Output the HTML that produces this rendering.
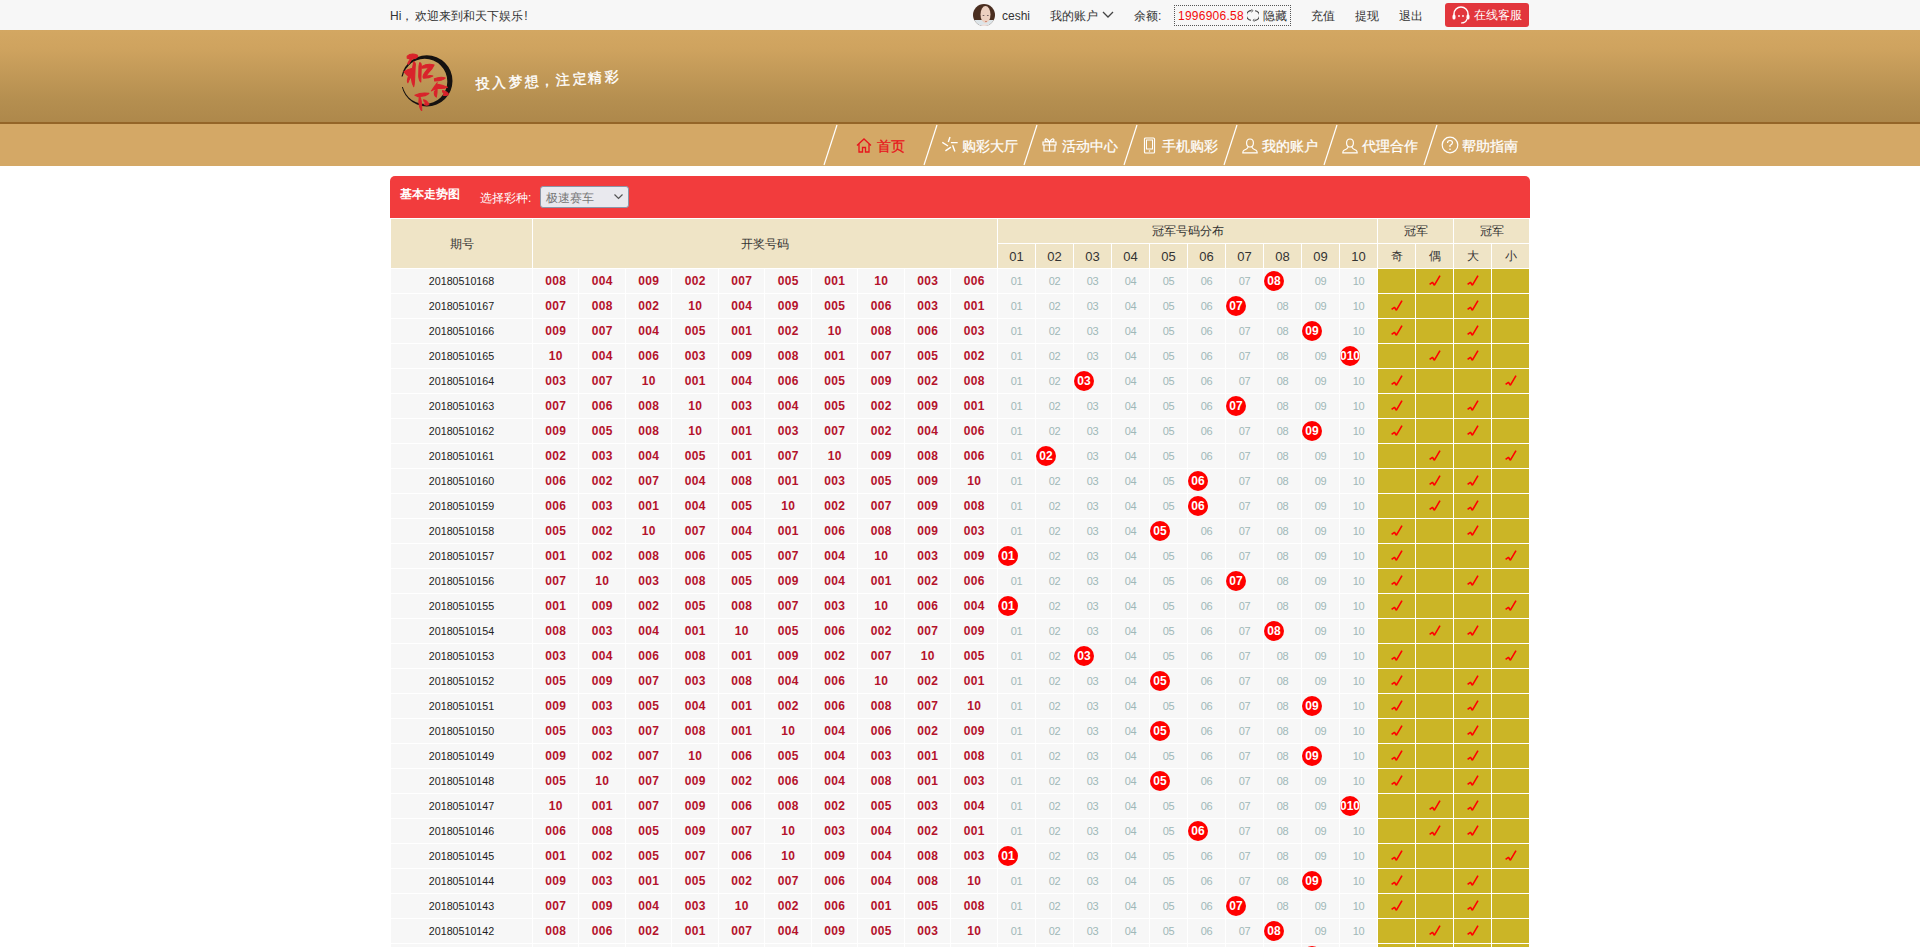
<!DOCTYPE html>
<html><head><meta charset="utf-8">
<style>
*{margin:0;padding:0;box-sizing:border-box}
html,body{width:1920px;height:947px;overflow:hidden;background:#fff;font-family:"Liberation Sans",sans-serif;color:#333}
.abs{position:absolute}
.slg{color:#fff;font-size:14px;line-height:16px;-webkit-text-stroke:0.35px #fff;transform:rotate(-4deg)}
#top{position:absolute;left:0;top:0;width:1920px;height:30px;background:#f7f7f7}
#hdr{position:absolute;left:0;top:30px;width:1920px;height:92px;background:linear-gradient(#d3a762 0%,#cfa35f 20%,#b58f50 75%,#ae884b 100%)}
#hdrline{position:absolute;left:0;top:122px;width:1920px;height:2px;background:#946528}
#nav{position:absolute;left:0;top:124px;width:1920px;height:42px;background:#d4a866}
.t12{font-size:12px;line-height:14px;position:absolute;white-space:nowrap;margin-top:1px}
.navi{position:absolute;top:138px;font-size:14px;line-height:16px;color:#fff;white-space:nowrap;-webkit-text-stroke:0.25px currentColor}
#redbar{position:absolute;left:390px;top:176px;width:1140px;height:42px;background:#f23c3d;border-radius:5px 5px 0 0}
#tbl{position:absolute;left:390px;top:218px;width:1140px;height:729px;background:#fff}
.hd,.dc,.gc{position:absolute;display:flex;align-items:center;justify-content:center;white-space:nowrap}
.hd{background:#efe4c6;font-size:12px;color:#333;padding-top:1px}
.hn{font-size:13px}
.dc{background:#f7f7f7}
.per{font-size:10.7px;color:#222}
.num{font-size:12px;font-weight:bold;color:#b4122b;letter-spacing:0.3px;padding-left:0.3px}
.dn{font-size:11px;color:#9fb8b8;letter-spacing:-0.3px}
.gc{background:#cbb526}
.ball{position:absolute;left:0;top:2px;width:20px;height:20px;border-radius:50%;background:#f00;color:#fff;font-weight:bold;font-size:12px;display:flex;align-items:center;justify-content:center;letter-spacing:0px}
</style></head><body>
<div id="top"></div>
<div class="t12" style="left:390px;top:8px;color:#333">Hi<span style="margin-right:1.5px">，</span>欢迎来到和天下娱乐<span style="margin-left:1.5px">!</span></div>
<svg class="abs" style="left:973px;top:4px" width="22" height="22" viewBox="0 0 22 22"><defs><clipPath id="av"><circle cx="11" cy="11" r="11"/></clipPath></defs><g clip-path="url(#av)"><rect width="22" height="22" fill="#4a2e20"/><rect x="0" y="16" width="22" height="6" fill="#dde4e8"/><ellipse cx="12.5" cy="10.5" rx="5" ry="8.5" fill="#ecd0c0"/><path d="M7 22 Q12 18 17 22 Z" fill="#f0e0dc"/><ellipse cx="10.5" cy="11.5" rx="1" ry="0.6" fill="#6a5a5a"/><ellipse cx="14.8" cy="11.5" rx="1" ry="0.6" fill="#6a5a5a"/><path d="M12 17.5 H14" stroke="#c87a6a" stroke-width="0.8"/></g></svg>
<div class="t12" style="left:1002px;top:8px">ceshi</div>
<div class="t12" style="left:1050px;top:8px">我的账户</div>
<svg class="abs" style="left:1102px;top:11px" width="12" height="8" viewBox="0 0 12 8"><path d="M1 1 L6 6 L11 1" fill="none" stroke="#444" stroke-width="1.3"/></svg>
<div class="t12" style="left:1134px;top:8px">余额:</div>
<div class="abs" style="left:1174px;top:5px;width:117px;height:21px;border:1px dotted #555"></div>
<div class="t12" style="left:1178px;top:8px;color:#f40a0a;font-size:12px;letter-spacing:0.25px">1996906.58</div>
<svg class="abs" style="left:1247px;top:9px" width="12" height="13" viewBox="0 0 12 13"><path d="M4.5 1.6 A4.8 4.8 0 0 0 4 11.2" fill="none" stroke="#444" stroke-width="1.1"/><path d="M7.5 11.4 A4.8 4.8 0 0 0 8 1.8" fill="none" stroke="#444" stroke-width="1.1"/><path d="M4.5 0.2 L6 1.7 L4.3 3.2" fill="none" stroke="#555" stroke-width="0.9"/><path d="M7.5 9.8 L6 11.3 L7.6 12.8" fill="none" stroke="#555" stroke-width="0.9"/></svg>
<div class="t12" style="left:1263px;top:8px">隐藏</div>
<div class="t12" style="left:1311px;top:8px">充值</div>
<div class="t12" style="left:1355px;top:8px">提现</div>
<div class="t12" style="left:1399px;top:8px">退出</div>
<div class="abs" style="left:1445px;top:3px;width:84px;height:24px;background:#e2363c;border-radius:3px"></div>
<svg class="abs" style="left:1451px;top:6px" width="20" height="18" viewBox="0 0 20 18"><path d="M3 11 V8 A7 7 0 0 1 17 8 V11" fill="none" stroke="#fff" stroke-width="1.5"/><rect x="1.5" y="8.5" width="3" height="5" rx="1.5" fill="#fff"/><rect x="15.5" y="8.5" width="3" height="5" rx="1.5" fill="#fff"/><path d="M16 13 Q15 17 10 17" fill="none" stroke="#fff" stroke-width="1.2"/><circle cx="8" cy="10" r="0.9" fill="#fff"/><circle cx="12" cy="10" r="0.9" fill="#fff"/></svg>
<div class="t12" style="left:1474px;top:7px;color:#fff">在线客服</div>

<div id="hdr"></div>
<div id="hdrline"></div>
<svg class="abs" style="left:398px;top:50px" width="60" height="62" viewBox="0 0 916 947">
<defs><mask id="lm"><rect width="916" height="947" fill="#fff"/><rect x="0" y="405" width="170" height="160" fill="#000"/></mask></defs>
<path mask="url(#lm)" fill-rule="evenodd" fill="#161210" d="M48 472 A392 392 0 1 0 832 472 A392 392 0 1 0 48 472 Z M63 480 A345 345 0 1 1 753 480 A345 345 0 1 1 63 480 Z"/>
<g fill="#d9232b" stroke="#d9232b" stroke-width="16" stroke-linejoin="round">
<path d="M140 95 Q200 40 290 75 Q320 100 270 125 Q200 140 140 125 Z"/>
<path d="M190 128 L212 133 L162 218 L148 208 Z"/>
<path d="M240 180 Q275 190 262 260 L255 420 Q252 520 240 560 Q212 520 205 440 L200 400 Q170 450 150 500 Q132 470 160 400 Q120 370 90 330 Q140 300 220 280 Z"/>
<path d="M330 195 Q360 190 355 260 L348 490 Q322 470 316 400 L320 250 Z"/>
<path d="M365 250 Q450 200 552 228 Q532 280 470 340 Q440 380 432 400 Q500 378 532 398 Q480 432 392 432 Q368 410 400 360 Q440 300 468 272 Q420 270 365 278 Z"/>
<path d="M555 440 Q650 400 722 428 Q690 472 560 475 Z"/>
<path d="M585 518 Q680 528 755 568 Q700 595 605 585 Q545 605 510 625 Q560 545 600 500 Z"/>
<path d="M598 575 Q600 650 585 720 Q548 700 555 640 Z"/>
<path d="M680 618 Q762 640 772 680 Q742 702 690 692 Q722 662 680 642 Z"/>
<path d="M258 692 Q360 640 472 662 Q440 705 300 712 Z"/>
<path d="M325 700 Q368 760 362 925 Q332 905 318 800 Z"/>
<path d="M390 760 Q445 770 472 832 Q440 852 400 832 Q432 810 395 782 Z"/>
</g></svg>
<div class="abs slg" style="left:476.2px;top:76.3px">投</div>
<div class="abs slg" style="left:492.0px;top:75.4px">入</div>
<div class="abs slg" style="left:508.5px;top:74.4px">梦</div>
<div class="abs slg" style="left:524.5px;top:73.5px">想</div>
<div class="abs slg" style="left:539.5px;top:72.6px">，</div>
<div class="abs slg" style="left:556.2px;top:71.6px">注</div>
<div class="abs slg" style="left:572.5px;top:70.7px">定</div>
<div class="abs slg" style="left:587.8px;top:69.8px">精</div>
<div class="abs slg" style="left:604.5px;top:68.8px">彩</div>

<div id="nav"></div>
<svg class="abs" style="left:800px;top:124px" width="740" height="42" viewBox="0 0 740 42">
<g stroke="#fff" stroke-width="1.2"><line x1="37" y1="1" x2="24" y2="41"/><line x1="137" y1="1" x2="124" y2="41"/><line x1="237" y1="1" x2="224" y2="41"/><line x1="337" y1="1" x2="324" y2="41"/><line x1="437" y1="1" x2="424" y2="41"/><line x1="537" y1="1" x2="524" y2="41"/><line x1="637" y1="1" x2="624" y2="41"/></g>
</svg>
<svg class="abs" style="left:856px;top:138px" width="16" height="15" viewBox="0 0 16 15"><path d="M1 7.5 L8 1 L15 7.5 M3 6 V14 H6.5 V9.5 H9.5 V14 H13 V6" fill="none" stroke="#e8141c" stroke-width="1.3"/></svg>
<div class="navi" style="left:877px;color:#e8141c">首页</div>
<svg class="abs" style="left:942px;top:136px" width="17" height="17" viewBox="0 0 17 17"><path d="M8 1 L6.3 6 M0.3 6.3 L6 10 M8.9 6.6 H15.7 M3.4 14.9 L8.9 11.2 M10.6 9.2 L12.9 15.5" fill="none" stroke="#fff" stroke-width="1.4"/></svg>
<div class="navi" style="left:962px">购彩大厅</div>
<svg class="abs" style="left:1042px;top:137px" width="15" height="15" viewBox="0 0 15 15"><path d="M1 5 H14 V8 H1 Z M2 8 V14 H13 V8 M7.5 5 V14 M7.5 5 Q4 0 3 3 Q3 5 7.5 5 Q11 0 12 3 Q12 5 7.5 5" fill="none" stroke="#fff" stroke-width="1.2"/></svg>
<div class="navi" style="left:1062px">活动中心</div>
<svg class="abs" style="left:1143px;top:137px" width="13" height="17" viewBox="0 0 13 17"><rect x="1.5" y="1" width="10" height="15" rx="1" fill="none" stroke="#fff" stroke-width="1.2"/><rect x="3.5" y="3" width="6" height="9" fill="none" stroke="#fff" stroke-width="1"/><circle cx="6.5" cy="14" r="0.8" fill="#fff"/></svg>
<div class="navi" style="left:1162px">手机购彩</div>
<svg class="abs" style="left:1242px;top:138px" width="16" height="16" viewBox="0 0 16 16"><path d="M8 1 C5.5 1 4.6 3 4.6 5 C4.6 7.2 5.8 9 8 9 C10.2 9 11.4 7.2 11.4 5 C11.4 3 10.5 1 8 1 Z M6 8.6 Q6.2 10.4 2 12.3 Q0.8 12.9 0.8 14.8 H15.2 Q15.2 12.9 14 12.3 Q9.8 10.4 10 8.6" fill="none" stroke="#fff" stroke-width="1.15"/></svg>
<div class="navi" style="left:1262px">我的账户</div>
<svg class="abs" style="left:1342px;top:138px" width="16" height="16" viewBox="0 0 16 16"><path d="M8 1 C5.5 1 4.6 3 4.6 5 C4.6 7.2 5.8 9 8 9 C10.2 9 11.4 7.2 11.4 5 C11.4 3 10.5 1 8 1 Z M6 8.6 Q6.2 10.4 2 12.3 Q0.8 12.9 0.8 14.8 H15.2 Q15.2 12.9 14 12.3 Q9.8 10.4 10 8.6" fill="none" stroke="#fff" stroke-width="1.15"/></svg>
<div class="navi" style="left:1362px">代理合作</div>
<svg class="abs" style="left:1441px;top:136px" width="18" height="18" viewBox="0 0 18 18"><circle cx="9" cy="9" r="7.8" fill="none" stroke="#fff" stroke-width="1.2"/><path d="M6.5 7 Q6.5 4.5 9 4.5 Q11.5 4.5 11.5 6.8 Q11.5 8.3 9 9.5 V11" fill="none" stroke="#fff" stroke-width="1.2"/><circle cx="9" cy="13.2" r="0.8" fill="#fff"/></svg>
<div class="navi" style="left:1462px">帮助指南</div>

<div id="redbar"></div>
<div class="abs" style="left:400px;top:187px;color:#fff;font-size:12px;font-weight:bold;line-height:14px">基本走势图</div>
<div class="abs" style="left:480px;top:191px;color:#fff;font-size:12px;line-height:14px">选择彩种:</div>
<div class="abs" style="left:540px;top:186px;width:89px;height:22px;background:#e9e9ee;border:1px solid #8a96a8;border-radius:3px"></div>
<div class="abs" style="left:546px;top:191px;color:#777;font-size:12px;line-height:14px">极速赛车</div>
<svg class="abs" style="left:614px;top:194px" width="9" height="6" viewBox="0 0 9 6"><path d="M0.5 0.5 L4.5 4.5 L8.5 0.5" fill="none" stroke="#555" stroke-width="1.2"/></svg>
<div id="tbl"></div>
<div class="hd" style="left:391px;top:219px;width:141px;height:49px">期号</div>
<div class="hd" style="left:533px;top:219px;width:464px;height:49px">开奖号码</div>
<div class="hd" style="left:998px;top:219px;width:379px;height:24px">冠军号码分布</div>
<div class="hd" style="left:1378px;top:219px;width:75px;height:24px">冠军</div>
<div class="hd" style="left:1454px;top:219px;width:75px;height:24px">冠军</div>
<div class="hd hn" style="left:998px;top:244px;width:37px;height:24px">01</div>
<div class="hd hn" style="left:1036px;top:244px;width:37px;height:24px">02</div>
<div class="hd hn" style="left:1074px;top:244px;width:37px;height:24px">03</div>
<div class="hd hn" style="left:1112px;top:244px;width:37px;height:24px">04</div>
<div class="hd hn" style="left:1150px;top:244px;width:37px;height:24px">05</div>
<div class="hd hn" style="left:1188px;top:244px;width:37px;height:24px">06</div>
<div class="hd hn" style="left:1226px;top:244px;width:37px;height:24px">07</div>
<div class="hd hn" style="left:1264px;top:244px;width:37px;height:24px">08</div>
<div class="hd hn" style="left:1302px;top:244px;width:37px;height:24px">09</div>
<div class="hd hn" style="left:1340px;top:244px;width:37px;height:24px">10</div>
<div class="hd" style="left:1378px;top:244px;width:37px;height:24px">奇</div>
<div class="hd" style="left:1416px;top:244px;width:37px;height:24px">偶</div>
<div class="hd" style="left:1454px;top:244px;width:37px;height:24px">大</div>
<div class="hd" style="left:1492px;top:244px;width:37px;height:24px">小</div>
<div class="dc per" style="left:391px;top:269px;width:141px;height:24px">20180510168</div>
<div class="dc num" style="left:533px;top:269px;width:45px;height:24px">008</div>
<div class="dc num" style="left:579px;top:269px;width:46px;height:24px">004</div>
<div class="dc num" style="left:626px;top:269px;width:45px;height:24px">009</div>
<div class="dc num" style="left:672px;top:269px;width:46px;height:24px">002</div>
<div class="dc num" style="left:719px;top:269px;width:45px;height:24px">007</div>
<div class="dc num" style="left:765px;top:269px;width:46px;height:24px">005</div>
<div class="dc num" style="left:812px;top:269px;width:45px;height:24px">001</div>
<div class="dc num" style="left:858px;top:269px;width:46px;height:24px">10</div>
<div class="dc num" style="left:905px;top:269px;width:45px;height:24px">003</div>
<div class="dc num" style="left:951px;top:269px;width:46px;height:24px">006</div>
<div class="dc dn" style="left:998px;top:269px;width:37px;height:24px">01</div>
<div class="dc dn" style="left:1036px;top:269px;width:37px;height:24px">02</div>
<div class="dc dn" style="left:1074px;top:269px;width:37px;height:24px">03</div>
<div class="dc dn" style="left:1112px;top:269px;width:37px;height:24px">04</div>
<div class="dc dn" style="left:1150px;top:269px;width:37px;height:24px">05</div>
<div class="dc dn" style="left:1188px;top:269px;width:37px;height:24px">06</div>
<div class="dc dn" style="left:1226px;top:269px;width:37px;height:24px">07</div>
<div class="dc" style="left:1264px;top:269px;width:37px;height:24px"><span class="ball">08</span></div>
<div class="dc dn" style="left:1302px;top:269px;width:37px;height:24px">09</div>
<div class="dc dn" style="left:1340px;top:269px;width:37px;height:24px">10</div>
<div class="gc" style="left:1378px;top:269px;width:37px;height:24px"></div>
<div class="gc" style="left:1416px;top:269px;width:37px;height:24px"><svg width="12" height="12" viewBox="0 0 12 12"><path d="M0.6 9.3 L3.4 7.3 L5.4 10.2 L11 0.6" fill="none" stroke="#f00" stroke-width="1.6" stroke-linejoin="bevel"/></svg></div>
<div class="gc" style="left:1454px;top:269px;width:37px;height:24px"><svg width="12" height="12" viewBox="0 0 12 12"><path d="M0.6 9.3 L3.4 7.3 L5.4 10.2 L11 0.6" fill="none" stroke="#f00" stroke-width="1.6" stroke-linejoin="bevel"/></svg></div>
<div class="gc" style="left:1492px;top:269px;width:37px;height:24px"></div>
<div class="dc per" style="left:391px;top:294px;width:141px;height:24px">20180510167</div>
<div class="dc num" style="left:533px;top:294px;width:45px;height:24px">007</div>
<div class="dc num" style="left:579px;top:294px;width:46px;height:24px">008</div>
<div class="dc num" style="left:626px;top:294px;width:45px;height:24px">002</div>
<div class="dc num" style="left:672px;top:294px;width:46px;height:24px">10</div>
<div class="dc num" style="left:719px;top:294px;width:45px;height:24px">004</div>
<div class="dc num" style="left:765px;top:294px;width:46px;height:24px">009</div>
<div class="dc num" style="left:812px;top:294px;width:45px;height:24px">005</div>
<div class="dc num" style="left:858px;top:294px;width:46px;height:24px">006</div>
<div class="dc num" style="left:905px;top:294px;width:45px;height:24px">003</div>
<div class="dc num" style="left:951px;top:294px;width:46px;height:24px">001</div>
<div class="dc dn" style="left:998px;top:294px;width:37px;height:24px">01</div>
<div class="dc dn" style="left:1036px;top:294px;width:37px;height:24px">02</div>
<div class="dc dn" style="left:1074px;top:294px;width:37px;height:24px">03</div>
<div class="dc dn" style="left:1112px;top:294px;width:37px;height:24px">04</div>
<div class="dc dn" style="left:1150px;top:294px;width:37px;height:24px">05</div>
<div class="dc dn" style="left:1188px;top:294px;width:37px;height:24px">06</div>
<div class="dc" style="left:1226px;top:294px;width:37px;height:24px"><span class="ball">07</span></div>
<div class="dc dn" style="left:1264px;top:294px;width:37px;height:24px">08</div>
<div class="dc dn" style="left:1302px;top:294px;width:37px;height:24px">09</div>
<div class="dc dn" style="left:1340px;top:294px;width:37px;height:24px">10</div>
<div class="gc" style="left:1378px;top:294px;width:37px;height:24px"><svg width="12" height="12" viewBox="0 0 12 12"><path d="M0.6 9.3 L3.4 7.3 L5.4 10.2 L11 0.6" fill="none" stroke="#f00" stroke-width="1.6" stroke-linejoin="bevel"/></svg></div>
<div class="gc" style="left:1416px;top:294px;width:37px;height:24px"></div>
<div class="gc" style="left:1454px;top:294px;width:37px;height:24px"><svg width="12" height="12" viewBox="0 0 12 12"><path d="M0.6 9.3 L3.4 7.3 L5.4 10.2 L11 0.6" fill="none" stroke="#f00" stroke-width="1.6" stroke-linejoin="bevel"/></svg></div>
<div class="gc" style="left:1492px;top:294px;width:37px;height:24px"></div>
<div class="dc per" style="left:391px;top:319px;width:141px;height:24px">20180510166</div>
<div class="dc num" style="left:533px;top:319px;width:45px;height:24px">009</div>
<div class="dc num" style="left:579px;top:319px;width:46px;height:24px">007</div>
<div class="dc num" style="left:626px;top:319px;width:45px;height:24px">004</div>
<div class="dc num" style="left:672px;top:319px;width:46px;height:24px">005</div>
<div class="dc num" style="left:719px;top:319px;width:45px;height:24px">001</div>
<div class="dc num" style="left:765px;top:319px;width:46px;height:24px">002</div>
<div class="dc num" style="left:812px;top:319px;width:45px;height:24px">10</div>
<div class="dc num" style="left:858px;top:319px;width:46px;height:24px">008</div>
<div class="dc num" style="left:905px;top:319px;width:45px;height:24px">006</div>
<div class="dc num" style="left:951px;top:319px;width:46px;height:24px">003</div>
<div class="dc dn" style="left:998px;top:319px;width:37px;height:24px">01</div>
<div class="dc dn" style="left:1036px;top:319px;width:37px;height:24px">02</div>
<div class="dc dn" style="left:1074px;top:319px;width:37px;height:24px">03</div>
<div class="dc dn" style="left:1112px;top:319px;width:37px;height:24px">04</div>
<div class="dc dn" style="left:1150px;top:319px;width:37px;height:24px">05</div>
<div class="dc dn" style="left:1188px;top:319px;width:37px;height:24px">06</div>
<div class="dc dn" style="left:1226px;top:319px;width:37px;height:24px">07</div>
<div class="dc dn" style="left:1264px;top:319px;width:37px;height:24px">08</div>
<div class="dc" style="left:1302px;top:319px;width:37px;height:24px"><span class="ball">09</span></div>
<div class="dc dn" style="left:1340px;top:319px;width:37px;height:24px">10</div>
<div class="gc" style="left:1378px;top:319px;width:37px;height:24px"><svg width="12" height="12" viewBox="0 0 12 12"><path d="M0.6 9.3 L3.4 7.3 L5.4 10.2 L11 0.6" fill="none" stroke="#f00" stroke-width="1.6" stroke-linejoin="bevel"/></svg></div>
<div class="gc" style="left:1416px;top:319px;width:37px;height:24px"></div>
<div class="gc" style="left:1454px;top:319px;width:37px;height:24px"><svg width="12" height="12" viewBox="0 0 12 12"><path d="M0.6 9.3 L3.4 7.3 L5.4 10.2 L11 0.6" fill="none" stroke="#f00" stroke-width="1.6" stroke-linejoin="bevel"/></svg></div>
<div class="gc" style="left:1492px;top:319px;width:37px;height:24px"></div>
<div class="dc per" style="left:391px;top:344px;width:141px;height:24px">20180510165</div>
<div class="dc num" style="left:533px;top:344px;width:45px;height:24px">10</div>
<div class="dc num" style="left:579px;top:344px;width:46px;height:24px">004</div>
<div class="dc num" style="left:626px;top:344px;width:45px;height:24px">006</div>
<div class="dc num" style="left:672px;top:344px;width:46px;height:24px">003</div>
<div class="dc num" style="left:719px;top:344px;width:45px;height:24px">009</div>
<div class="dc num" style="left:765px;top:344px;width:46px;height:24px">008</div>
<div class="dc num" style="left:812px;top:344px;width:45px;height:24px">001</div>
<div class="dc num" style="left:858px;top:344px;width:46px;height:24px">007</div>
<div class="dc num" style="left:905px;top:344px;width:45px;height:24px">005</div>
<div class="dc num" style="left:951px;top:344px;width:46px;height:24px">002</div>
<div class="dc dn" style="left:998px;top:344px;width:37px;height:24px">01</div>
<div class="dc dn" style="left:1036px;top:344px;width:37px;height:24px">02</div>
<div class="dc dn" style="left:1074px;top:344px;width:37px;height:24px">03</div>
<div class="dc dn" style="left:1112px;top:344px;width:37px;height:24px">04</div>
<div class="dc dn" style="left:1150px;top:344px;width:37px;height:24px">05</div>
<div class="dc dn" style="left:1188px;top:344px;width:37px;height:24px">06</div>
<div class="dc dn" style="left:1226px;top:344px;width:37px;height:24px">07</div>
<div class="dc dn" style="left:1264px;top:344px;width:37px;height:24px">08</div>
<div class="dc dn" style="left:1302px;top:344px;width:37px;height:24px">09</div>
<div class="dc" style="left:1340px;top:344px;width:37px;height:24px"><span class="ball">010</span></div>
<div class="gc" style="left:1378px;top:344px;width:37px;height:24px"></div>
<div class="gc" style="left:1416px;top:344px;width:37px;height:24px"><svg width="12" height="12" viewBox="0 0 12 12"><path d="M0.6 9.3 L3.4 7.3 L5.4 10.2 L11 0.6" fill="none" stroke="#f00" stroke-width="1.6" stroke-linejoin="bevel"/></svg></div>
<div class="gc" style="left:1454px;top:344px;width:37px;height:24px"><svg width="12" height="12" viewBox="0 0 12 12"><path d="M0.6 9.3 L3.4 7.3 L5.4 10.2 L11 0.6" fill="none" stroke="#f00" stroke-width="1.6" stroke-linejoin="bevel"/></svg></div>
<div class="gc" style="left:1492px;top:344px;width:37px;height:24px"></div>
<div class="dc per" style="left:391px;top:369px;width:141px;height:24px">20180510164</div>
<div class="dc num" style="left:533px;top:369px;width:45px;height:24px">003</div>
<div class="dc num" style="left:579px;top:369px;width:46px;height:24px">007</div>
<div class="dc num" style="left:626px;top:369px;width:45px;height:24px">10</div>
<div class="dc num" style="left:672px;top:369px;width:46px;height:24px">001</div>
<div class="dc num" style="left:719px;top:369px;width:45px;height:24px">004</div>
<div class="dc num" style="left:765px;top:369px;width:46px;height:24px">006</div>
<div class="dc num" style="left:812px;top:369px;width:45px;height:24px">005</div>
<div class="dc num" style="left:858px;top:369px;width:46px;height:24px">009</div>
<div class="dc num" style="left:905px;top:369px;width:45px;height:24px">002</div>
<div class="dc num" style="left:951px;top:369px;width:46px;height:24px">008</div>
<div class="dc dn" style="left:998px;top:369px;width:37px;height:24px">01</div>
<div class="dc dn" style="left:1036px;top:369px;width:37px;height:24px">02</div>
<div class="dc" style="left:1074px;top:369px;width:37px;height:24px"><span class="ball">03</span></div>
<div class="dc dn" style="left:1112px;top:369px;width:37px;height:24px">04</div>
<div class="dc dn" style="left:1150px;top:369px;width:37px;height:24px">05</div>
<div class="dc dn" style="left:1188px;top:369px;width:37px;height:24px">06</div>
<div class="dc dn" style="left:1226px;top:369px;width:37px;height:24px">07</div>
<div class="dc dn" style="left:1264px;top:369px;width:37px;height:24px">08</div>
<div class="dc dn" style="left:1302px;top:369px;width:37px;height:24px">09</div>
<div class="dc dn" style="left:1340px;top:369px;width:37px;height:24px">10</div>
<div class="gc" style="left:1378px;top:369px;width:37px;height:24px"><svg width="12" height="12" viewBox="0 0 12 12"><path d="M0.6 9.3 L3.4 7.3 L5.4 10.2 L11 0.6" fill="none" stroke="#f00" stroke-width="1.6" stroke-linejoin="bevel"/></svg></div>
<div class="gc" style="left:1416px;top:369px;width:37px;height:24px"></div>
<div class="gc" style="left:1454px;top:369px;width:37px;height:24px"></div>
<div class="gc" style="left:1492px;top:369px;width:37px;height:24px"><svg width="12" height="12" viewBox="0 0 12 12"><path d="M0.6 9.3 L3.4 7.3 L5.4 10.2 L11 0.6" fill="none" stroke="#f00" stroke-width="1.6" stroke-linejoin="bevel"/></svg></div>
<div class="dc per" style="left:391px;top:394px;width:141px;height:24px">20180510163</div>
<div class="dc num" style="left:533px;top:394px;width:45px;height:24px">007</div>
<div class="dc num" style="left:579px;top:394px;width:46px;height:24px">006</div>
<div class="dc num" style="left:626px;top:394px;width:45px;height:24px">008</div>
<div class="dc num" style="left:672px;top:394px;width:46px;height:24px">10</div>
<div class="dc num" style="left:719px;top:394px;width:45px;height:24px">003</div>
<div class="dc num" style="left:765px;top:394px;width:46px;height:24px">004</div>
<div class="dc num" style="left:812px;top:394px;width:45px;height:24px">005</div>
<div class="dc num" style="left:858px;top:394px;width:46px;height:24px">002</div>
<div class="dc num" style="left:905px;top:394px;width:45px;height:24px">009</div>
<div class="dc num" style="left:951px;top:394px;width:46px;height:24px">001</div>
<div class="dc dn" style="left:998px;top:394px;width:37px;height:24px">01</div>
<div class="dc dn" style="left:1036px;top:394px;width:37px;height:24px">02</div>
<div class="dc dn" style="left:1074px;top:394px;width:37px;height:24px">03</div>
<div class="dc dn" style="left:1112px;top:394px;width:37px;height:24px">04</div>
<div class="dc dn" style="left:1150px;top:394px;width:37px;height:24px">05</div>
<div class="dc dn" style="left:1188px;top:394px;width:37px;height:24px">06</div>
<div class="dc" style="left:1226px;top:394px;width:37px;height:24px"><span class="ball">07</span></div>
<div class="dc dn" style="left:1264px;top:394px;width:37px;height:24px">08</div>
<div class="dc dn" style="left:1302px;top:394px;width:37px;height:24px">09</div>
<div class="dc dn" style="left:1340px;top:394px;width:37px;height:24px">10</div>
<div class="gc" style="left:1378px;top:394px;width:37px;height:24px"><svg width="12" height="12" viewBox="0 0 12 12"><path d="M0.6 9.3 L3.4 7.3 L5.4 10.2 L11 0.6" fill="none" stroke="#f00" stroke-width="1.6" stroke-linejoin="bevel"/></svg></div>
<div class="gc" style="left:1416px;top:394px;width:37px;height:24px"></div>
<div class="gc" style="left:1454px;top:394px;width:37px;height:24px"><svg width="12" height="12" viewBox="0 0 12 12"><path d="M0.6 9.3 L3.4 7.3 L5.4 10.2 L11 0.6" fill="none" stroke="#f00" stroke-width="1.6" stroke-linejoin="bevel"/></svg></div>
<div class="gc" style="left:1492px;top:394px;width:37px;height:24px"></div>
<div class="dc per" style="left:391px;top:419px;width:141px;height:24px">20180510162</div>
<div class="dc num" style="left:533px;top:419px;width:45px;height:24px">009</div>
<div class="dc num" style="left:579px;top:419px;width:46px;height:24px">005</div>
<div class="dc num" style="left:626px;top:419px;width:45px;height:24px">008</div>
<div class="dc num" style="left:672px;top:419px;width:46px;height:24px">10</div>
<div class="dc num" style="left:719px;top:419px;width:45px;height:24px">001</div>
<div class="dc num" style="left:765px;top:419px;width:46px;height:24px">003</div>
<div class="dc num" style="left:812px;top:419px;width:45px;height:24px">007</div>
<div class="dc num" style="left:858px;top:419px;width:46px;height:24px">002</div>
<div class="dc num" style="left:905px;top:419px;width:45px;height:24px">004</div>
<div class="dc num" style="left:951px;top:419px;width:46px;height:24px">006</div>
<div class="dc dn" style="left:998px;top:419px;width:37px;height:24px">01</div>
<div class="dc dn" style="left:1036px;top:419px;width:37px;height:24px">02</div>
<div class="dc dn" style="left:1074px;top:419px;width:37px;height:24px">03</div>
<div class="dc dn" style="left:1112px;top:419px;width:37px;height:24px">04</div>
<div class="dc dn" style="left:1150px;top:419px;width:37px;height:24px">05</div>
<div class="dc dn" style="left:1188px;top:419px;width:37px;height:24px">06</div>
<div class="dc dn" style="left:1226px;top:419px;width:37px;height:24px">07</div>
<div class="dc dn" style="left:1264px;top:419px;width:37px;height:24px">08</div>
<div class="dc" style="left:1302px;top:419px;width:37px;height:24px"><span class="ball">09</span></div>
<div class="dc dn" style="left:1340px;top:419px;width:37px;height:24px">10</div>
<div class="gc" style="left:1378px;top:419px;width:37px;height:24px"><svg width="12" height="12" viewBox="0 0 12 12"><path d="M0.6 9.3 L3.4 7.3 L5.4 10.2 L11 0.6" fill="none" stroke="#f00" stroke-width="1.6" stroke-linejoin="bevel"/></svg></div>
<div class="gc" style="left:1416px;top:419px;width:37px;height:24px"></div>
<div class="gc" style="left:1454px;top:419px;width:37px;height:24px"><svg width="12" height="12" viewBox="0 0 12 12"><path d="M0.6 9.3 L3.4 7.3 L5.4 10.2 L11 0.6" fill="none" stroke="#f00" stroke-width="1.6" stroke-linejoin="bevel"/></svg></div>
<div class="gc" style="left:1492px;top:419px;width:37px;height:24px"></div>
<div class="dc per" style="left:391px;top:444px;width:141px;height:24px">20180510161</div>
<div class="dc num" style="left:533px;top:444px;width:45px;height:24px">002</div>
<div class="dc num" style="left:579px;top:444px;width:46px;height:24px">003</div>
<div class="dc num" style="left:626px;top:444px;width:45px;height:24px">004</div>
<div class="dc num" style="left:672px;top:444px;width:46px;height:24px">005</div>
<div class="dc num" style="left:719px;top:444px;width:45px;height:24px">001</div>
<div class="dc num" style="left:765px;top:444px;width:46px;height:24px">007</div>
<div class="dc num" style="left:812px;top:444px;width:45px;height:24px">10</div>
<div class="dc num" style="left:858px;top:444px;width:46px;height:24px">009</div>
<div class="dc num" style="left:905px;top:444px;width:45px;height:24px">008</div>
<div class="dc num" style="left:951px;top:444px;width:46px;height:24px">006</div>
<div class="dc dn" style="left:998px;top:444px;width:37px;height:24px">01</div>
<div class="dc" style="left:1036px;top:444px;width:37px;height:24px"><span class="ball">02</span></div>
<div class="dc dn" style="left:1074px;top:444px;width:37px;height:24px">03</div>
<div class="dc dn" style="left:1112px;top:444px;width:37px;height:24px">04</div>
<div class="dc dn" style="left:1150px;top:444px;width:37px;height:24px">05</div>
<div class="dc dn" style="left:1188px;top:444px;width:37px;height:24px">06</div>
<div class="dc dn" style="left:1226px;top:444px;width:37px;height:24px">07</div>
<div class="dc dn" style="left:1264px;top:444px;width:37px;height:24px">08</div>
<div class="dc dn" style="left:1302px;top:444px;width:37px;height:24px">09</div>
<div class="dc dn" style="left:1340px;top:444px;width:37px;height:24px">10</div>
<div class="gc" style="left:1378px;top:444px;width:37px;height:24px"></div>
<div class="gc" style="left:1416px;top:444px;width:37px;height:24px"><svg width="12" height="12" viewBox="0 0 12 12"><path d="M0.6 9.3 L3.4 7.3 L5.4 10.2 L11 0.6" fill="none" stroke="#f00" stroke-width="1.6" stroke-linejoin="bevel"/></svg></div>
<div class="gc" style="left:1454px;top:444px;width:37px;height:24px"></div>
<div class="gc" style="left:1492px;top:444px;width:37px;height:24px"><svg width="12" height="12" viewBox="0 0 12 12"><path d="M0.6 9.3 L3.4 7.3 L5.4 10.2 L11 0.6" fill="none" stroke="#f00" stroke-width="1.6" stroke-linejoin="bevel"/></svg></div>
<div class="dc per" style="left:391px;top:469px;width:141px;height:24px">20180510160</div>
<div class="dc num" style="left:533px;top:469px;width:45px;height:24px">006</div>
<div class="dc num" style="left:579px;top:469px;width:46px;height:24px">002</div>
<div class="dc num" style="left:626px;top:469px;width:45px;height:24px">007</div>
<div class="dc num" style="left:672px;top:469px;width:46px;height:24px">004</div>
<div class="dc num" style="left:719px;top:469px;width:45px;height:24px">008</div>
<div class="dc num" style="left:765px;top:469px;width:46px;height:24px">001</div>
<div class="dc num" style="left:812px;top:469px;width:45px;height:24px">003</div>
<div class="dc num" style="left:858px;top:469px;width:46px;height:24px">005</div>
<div class="dc num" style="left:905px;top:469px;width:45px;height:24px">009</div>
<div class="dc num" style="left:951px;top:469px;width:46px;height:24px">10</div>
<div class="dc dn" style="left:998px;top:469px;width:37px;height:24px">01</div>
<div class="dc dn" style="left:1036px;top:469px;width:37px;height:24px">02</div>
<div class="dc dn" style="left:1074px;top:469px;width:37px;height:24px">03</div>
<div class="dc dn" style="left:1112px;top:469px;width:37px;height:24px">04</div>
<div class="dc dn" style="left:1150px;top:469px;width:37px;height:24px">05</div>
<div class="dc" style="left:1188px;top:469px;width:37px;height:24px"><span class="ball">06</span></div>
<div class="dc dn" style="left:1226px;top:469px;width:37px;height:24px">07</div>
<div class="dc dn" style="left:1264px;top:469px;width:37px;height:24px">08</div>
<div class="dc dn" style="left:1302px;top:469px;width:37px;height:24px">09</div>
<div class="dc dn" style="left:1340px;top:469px;width:37px;height:24px">10</div>
<div class="gc" style="left:1378px;top:469px;width:37px;height:24px"></div>
<div class="gc" style="left:1416px;top:469px;width:37px;height:24px"><svg width="12" height="12" viewBox="0 0 12 12"><path d="M0.6 9.3 L3.4 7.3 L5.4 10.2 L11 0.6" fill="none" stroke="#f00" stroke-width="1.6" stroke-linejoin="bevel"/></svg></div>
<div class="gc" style="left:1454px;top:469px;width:37px;height:24px"><svg width="12" height="12" viewBox="0 0 12 12"><path d="M0.6 9.3 L3.4 7.3 L5.4 10.2 L11 0.6" fill="none" stroke="#f00" stroke-width="1.6" stroke-linejoin="bevel"/></svg></div>
<div class="gc" style="left:1492px;top:469px;width:37px;height:24px"></div>
<div class="dc per" style="left:391px;top:494px;width:141px;height:24px">20180510159</div>
<div class="dc num" style="left:533px;top:494px;width:45px;height:24px">006</div>
<div class="dc num" style="left:579px;top:494px;width:46px;height:24px">003</div>
<div class="dc num" style="left:626px;top:494px;width:45px;height:24px">001</div>
<div class="dc num" style="left:672px;top:494px;width:46px;height:24px">004</div>
<div class="dc num" style="left:719px;top:494px;width:45px;height:24px">005</div>
<div class="dc num" style="left:765px;top:494px;width:46px;height:24px">10</div>
<div class="dc num" style="left:812px;top:494px;width:45px;height:24px">002</div>
<div class="dc num" style="left:858px;top:494px;width:46px;height:24px">007</div>
<div class="dc num" style="left:905px;top:494px;width:45px;height:24px">009</div>
<div class="dc num" style="left:951px;top:494px;width:46px;height:24px">008</div>
<div class="dc dn" style="left:998px;top:494px;width:37px;height:24px">01</div>
<div class="dc dn" style="left:1036px;top:494px;width:37px;height:24px">02</div>
<div class="dc dn" style="left:1074px;top:494px;width:37px;height:24px">03</div>
<div class="dc dn" style="left:1112px;top:494px;width:37px;height:24px">04</div>
<div class="dc dn" style="left:1150px;top:494px;width:37px;height:24px">05</div>
<div class="dc" style="left:1188px;top:494px;width:37px;height:24px"><span class="ball">06</span></div>
<div class="dc dn" style="left:1226px;top:494px;width:37px;height:24px">07</div>
<div class="dc dn" style="left:1264px;top:494px;width:37px;height:24px">08</div>
<div class="dc dn" style="left:1302px;top:494px;width:37px;height:24px">09</div>
<div class="dc dn" style="left:1340px;top:494px;width:37px;height:24px">10</div>
<div class="gc" style="left:1378px;top:494px;width:37px;height:24px"></div>
<div class="gc" style="left:1416px;top:494px;width:37px;height:24px"><svg width="12" height="12" viewBox="0 0 12 12"><path d="M0.6 9.3 L3.4 7.3 L5.4 10.2 L11 0.6" fill="none" stroke="#f00" stroke-width="1.6" stroke-linejoin="bevel"/></svg></div>
<div class="gc" style="left:1454px;top:494px;width:37px;height:24px"><svg width="12" height="12" viewBox="0 0 12 12"><path d="M0.6 9.3 L3.4 7.3 L5.4 10.2 L11 0.6" fill="none" stroke="#f00" stroke-width="1.6" stroke-linejoin="bevel"/></svg></div>
<div class="gc" style="left:1492px;top:494px;width:37px;height:24px"></div>
<div class="dc per" style="left:391px;top:519px;width:141px;height:24px">20180510158</div>
<div class="dc num" style="left:533px;top:519px;width:45px;height:24px">005</div>
<div class="dc num" style="left:579px;top:519px;width:46px;height:24px">002</div>
<div class="dc num" style="left:626px;top:519px;width:45px;height:24px">10</div>
<div class="dc num" style="left:672px;top:519px;width:46px;height:24px">007</div>
<div class="dc num" style="left:719px;top:519px;width:45px;height:24px">004</div>
<div class="dc num" style="left:765px;top:519px;width:46px;height:24px">001</div>
<div class="dc num" style="left:812px;top:519px;width:45px;height:24px">006</div>
<div class="dc num" style="left:858px;top:519px;width:46px;height:24px">008</div>
<div class="dc num" style="left:905px;top:519px;width:45px;height:24px">009</div>
<div class="dc num" style="left:951px;top:519px;width:46px;height:24px">003</div>
<div class="dc dn" style="left:998px;top:519px;width:37px;height:24px">01</div>
<div class="dc dn" style="left:1036px;top:519px;width:37px;height:24px">02</div>
<div class="dc dn" style="left:1074px;top:519px;width:37px;height:24px">03</div>
<div class="dc dn" style="left:1112px;top:519px;width:37px;height:24px">04</div>
<div class="dc" style="left:1150px;top:519px;width:37px;height:24px"><span class="ball">05</span></div>
<div class="dc dn" style="left:1188px;top:519px;width:37px;height:24px">06</div>
<div class="dc dn" style="left:1226px;top:519px;width:37px;height:24px">07</div>
<div class="dc dn" style="left:1264px;top:519px;width:37px;height:24px">08</div>
<div class="dc dn" style="left:1302px;top:519px;width:37px;height:24px">09</div>
<div class="dc dn" style="left:1340px;top:519px;width:37px;height:24px">10</div>
<div class="gc" style="left:1378px;top:519px;width:37px;height:24px"><svg width="12" height="12" viewBox="0 0 12 12"><path d="M0.6 9.3 L3.4 7.3 L5.4 10.2 L11 0.6" fill="none" stroke="#f00" stroke-width="1.6" stroke-linejoin="bevel"/></svg></div>
<div class="gc" style="left:1416px;top:519px;width:37px;height:24px"></div>
<div class="gc" style="left:1454px;top:519px;width:37px;height:24px"><svg width="12" height="12" viewBox="0 0 12 12"><path d="M0.6 9.3 L3.4 7.3 L5.4 10.2 L11 0.6" fill="none" stroke="#f00" stroke-width="1.6" stroke-linejoin="bevel"/></svg></div>
<div class="gc" style="left:1492px;top:519px;width:37px;height:24px"></div>
<div class="dc per" style="left:391px;top:544px;width:141px;height:24px">20180510157</div>
<div class="dc num" style="left:533px;top:544px;width:45px;height:24px">001</div>
<div class="dc num" style="left:579px;top:544px;width:46px;height:24px">002</div>
<div class="dc num" style="left:626px;top:544px;width:45px;height:24px">008</div>
<div class="dc num" style="left:672px;top:544px;width:46px;height:24px">006</div>
<div class="dc num" style="left:719px;top:544px;width:45px;height:24px">005</div>
<div class="dc num" style="left:765px;top:544px;width:46px;height:24px">007</div>
<div class="dc num" style="left:812px;top:544px;width:45px;height:24px">004</div>
<div class="dc num" style="left:858px;top:544px;width:46px;height:24px">10</div>
<div class="dc num" style="left:905px;top:544px;width:45px;height:24px">003</div>
<div class="dc num" style="left:951px;top:544px;width:46px;height:24px">009</div>
<div class="dc" style="left:998px;top:544px;width:37px;height:24px"><span class="ball">01</span></div>
<div class="dc dn" style="left:1036px;top:544px;width:37px;height:24px">02</div>
<div class="dc dn" style="left:1074px;top:544px;width:37px;height:24px">03</div>
<div class="dc dn" style="left:1112px;top:544px;width:37px;height:24px">04</div>
<div class="dc dn" style="left:1150px;top:544px;width:37px;height:24px">05</div>
<div class="dc dn" style="left:1188px;top:544px;width:37px;height:24px">06</div>
<div class="dc dn" style="left:1226px;top:544px;width:37px;height:24px">07</div>
<div class="dc dn" style="left:1264px;top:544px;width:37px;height:24px">08</div>
<div class="dc dn" style="left:1302px;top:544px;width:37px;height:24px">09</div>
<div class="dc dn" style="left:1340px;top:544px;width:37px;height:24px">10</div>
<div class="gc" style="left:1378px;top:544px;width:37px;height:24px"><svg width="12" height="12" viewBox="0 0 12 12"><path d="M0.6 9.3 L3.4 7.3 L5.4 10.2 L11 0.6" fill="none" stroke="#f00" stroke-width="1.6" stroke-linejoin="bevel"/></svg></div>
<div class="gc" style="left:1416px;top:544px;width:37px;height:24px"></div>
<div class="gc" style="left:1454px;top:544px;width:37px;height:24px"></div>
<div class="gc" style="left:1492px;top:544px;width:37px;height:24px"><svg width="12" height="12" viewBox="0 0 12 12"><path d="M0.6 9.3 L3.4 7.3 L5.4 10.2 L11 0.6" fill="none" stroke="#f00" stroke-width="1.6" stroke-linejoin="bevel"/></svg></div>
<div class="dc per" style="left:391px;top:569px;width:141px;height:24px">20180510156</div>
<div class="dc num" style="left:533px;top:569px;width:45px;height:24px">007</div>
<div class="dc num" style="left:579px;top:569px;width:46px;height:24px">10</div>
<div class="dc num" style="left:626px;top:569px;width:45px;height:24px">003</div>
<div class="dc num" style="left:672px;top:569px;width:46px;height:24px">008</div>
<div class="dc num" style="left:719px;top:569px;width:45px;height:24px">005</div>
<div class="dc num" style="left:765px;top:569px;width:46px;height:24px">009</div>
<div class="dc num" style="left:812px;top:569px;width:45px;height:24px">004</div>
<div class="dc num" style="left:858px;top:569px;width:46px;height:24px">001</div>
<div class="dc num" style="left:905px;top:569px;width:45px;height:24px">002</div>
<div class="dc num" style="left:951px;top:569px;width:46px;height:24px">006</div>
<div class="dc dn" style="left:998px;top:569px;width:37px;height:24px">01</div>
<div class="dc dn" style="left:1036px;top:569px;width:37px;height:24px">02</div>
<div class="dc dn" style="left:1074px;top:569px;width:37px;height:24px">03</div>
<div class="dc dn" style="left:1112px;top:569px;width:37px;height:24px">04</div>
<div class="dc dn" style="left:1150px;top:569px;width:37px;height:24px">05</div>
<div class="dc dn" style="left:1188px;top:569px;width:37px;height:24px">06</div>
<div class="dc" style="left:1226px;top:569px;width:37px;height:24px"><span class="ball">07</span></div>
<div class="dc dn" style="left:1264px;top:569px;width:37px;height:24px">08</div>
<div class="dc dn" style="left:1302px;top:569px;width:37px;height:24px">09</div>
<div class="dc dn" style="left:1340px;top:569px;width:37px;height:24px">10</div>
<div class="gc" style="left:1378px;top:569px;width:37px;height:24px"><svg width="12" height="12" viewBox="0 0 12 12"><path d="M0.6 9.3 L3.4 7.3 L5.4 10.2 L11 0.6" fill="none" stroke="#f00" stroke-width="1.6" stroke-linejoin="bevel"/></svg></div>
<div class="gc" style="left:1416px;top:569px;width:37px;height:24px"></div>
<div class="gc" style="left:1454px;top:569px;width:37px;height:24px"><svg width="12" height="12" viewBox="0 0 12 12"><path d="M0.6 9.3 L3.4 7.3 L5.4 10.2 L11 0.6" fill="none" stroke="#f00" stroke-width="1.6" stroke-linejoin="bevel"/></svg></div>
<div class="gc" style="left:1492px;top:569px;width:37px;height:24px"></div>
<div class="dc per" style="left:391px;top:594px;width:141px;height:24px">20180510155</div>
<div class="dc num" style="left:533px;top:594px;width:45px;height:24px">001</div>
<div class="dc num" style="left:579px;top:594px;width:46px;height:24px">009</div>
<div class="dc num" style="left:626px;top:594px;width:45px;height:24px">002</div>
<div class="dc num" style="left:672px;top:594px;width:46px;height:24px">005</div>
<div class="dc num" style="left:719px;top:594px;width:45px;height:24px">008</div>
<div class="dc num" style="left:765px;top:594px;width:46px;height:24px">007</div>
<div class="dc num" style="left:812px;top:594px;width:45px;height:24px">003</div>
<div class="dc num" style="left:858px;top:594px;width:46px;height:24px">10</div>
<div class="dc num" style="left:905px;top:594px;width:45px;height:24px">006</div>
<div class="dc num" style="left:951px;top:594px;width:46px;height:24px">004</div>
<div class="dc" style="left:998px;top:594px;width:37px;height:24px"><span class="ball">01</span></div>
<div class="dc dn" style="left:1036px;top:594px;width:37px;height:24px">02</div>
<div class="dc dn" style="left:1074px;top:594px;width:37px;height:24px">03</div>
<div class="dc dn" style="left:1112px;top:594px;width:37px;height:24px">04</div>
<div class="dc dn" style="left:1150px;top:594px;width:37px;height:24px">05</div>
<div class="dc dn" style="left:1188px;top:594px;width:37px;height:24px">06</div>
<div class="dc dn" style="left:1226px;top:594px;width:37px;height:24px">07</div>
<div class="dc dn" style="left:1264px;top:594px;width:37px;height:24px">08</div>
<div class="dc dn" style="left:1302px;top:594px;width:37px;height:24px">09</div>
<div class="dc dn" style="left:1340px;top:594px;width:37px;height:24px">10</div>
<div class="gc" style="left:1378px;top:594px;width:37px;height:24px"><svg width="12" height="12" viewBox="0 0 12 12"><path d="M0.6 9.3 L3.4 7.3 L5.4 10.2 L11 0.6" fill="none" stroke="#f00" stroke-width="1.6" stroke-linejoin="bevel"/></svg></div>
<div class="gc" style="left:1416px;top:594px;width:37px;height:24px"></div>
<div class="gc" style="left:1454px;top:594px;width:37px;height:24px"></div>
<div class="gc" style="left:1492px;top:594px;width:37px;height:24px"><svg width="12" height="12" viewBox="0 0 12 12"><path d="M0.6 9.3 L3.4 7.3 L5.4 10.2 L11 0.6" fill="none" stroke="#f00" stroke-width="1.6" stroke-linejoin="bevel"/></svg></div>
<div class="dc per" style="left:391px;top:619px;width:141px;height:24px">20180510154</div>
<div class="dc num" style="left:533px;top:619px;width:45px;height:24px">008</div>
<div class="dc num" style="left:579px;top:619px;width:46px;height:24px">003</div>
<div class="dc num" style="left:626px;top:619px;width:45px;height:24px">004</div>
<div class="dc num" style="left:672px;top:619px;width:46px;height:24px">001</div>
<div class="dc num" style="left:719px;top:619px;width:45px;height:24px">10</div>
<div class="dc num" style="left:765px;top:619px;width:46px;height:24px">005</div>
<div class="dc num" style="left:812px;top:619px;width:45px;height:24px">006</div>
<div class="dc num" style="left:858px;top:619px;width:46px;height:24px">002</div>
<div class="dc num" style="left:905px;top:619px;width:45px;height:24px">007</div>
<div class="dc num" style="left:951px;top:619px;width:46px;height:24px">009</div>
<div class="dc dn" style="left:998px;top:619px;width:37px;height:24px">01</div>
<div class="dc dn" style="left:1036px;top:619px;width:37px;height:24px">02</div>
<div class="dc dn" style="left:1074px;top:619px;width:37px;height:24px">03</div>
<div class="dc dn" style="left:1112px;top:619px;width:37px;height:24px">04</div>
<div class="dc dn" style="left:1150px;top:619px;width:37px;height:24px">05</div>
<div class="dc dn" style="left:1188px;top:619px;width:37px;height:24px">06</div>
<div class="dc dn" style="left:1226px;top:619px;width:37px;height:24px">07</div>
<div class="dc" style="left:1264px;top:619px;width:37px;height:24px"><span class="ball">08</span></div>
<div class="dc dn" style="left:1302px;top:619px;width:37px;height:24px">09</div>
<div class="dc dn" style="left:1340px;top:619px;width:37px;height:24px">10</div>
<div class="gc" style="left:1378px;top:619px;width:37px;height:24px"></div>
<div class="gc" style="left:1416px;top:619px;width:37px;height:24px"><svg width="12" height="12" viewBox="0 0 12 12"><path d="M0.6 9.3 L3.4 7.3 L5.4 10.2 L11 0.6" fill="none" stroke="#f00" stroke-width="1.6" stroke-linejoin="bevel"/></svg></div>
<div class="gc" style="left:1454px;top:619px;width:37px;height:24px"><svg width="12" height="12" viewBox="0 0 12 12"><path d="M0.6 9.3 L3.4 7.3 L5.4 10.2 L11 0.6" fill="none" stroke="#f00" stroke-width="1.6" stroke-linejoin="bevel"/></svg></div>
<div class="gc" style="left:1492px;top:619px;width:37px;height:24px"></div>
<div class="dc per" style="left:391px;top:644px;width:141px;height:24px">20180510153</div>
<div class="dc num" style="left:533px;top:644px;width:45px;height:24px">003</div>
<div class="dc num" style="left:579px;top:644px;width:46px;height:24px">004</div>
<div class="dc num" style="left:626px;top:644px;width:45px;height:24px">006</div>
<div class="dc num" style="left:672px;top:644px;width:46px;height:24px">008</div>
<div class="dc num" style="left:719px;top:644px;width:45px;height:24px">001</div>
<div class="dc num" style="left:765px;top:644px;width:46px;height:24px">009</div>
<div class="dc num" style="left:812px;top:644px;width:45px;height:24px">002</div>
<div class="dc num" style="left:858px;top:644px;width:46px;height:24px">007</div>
<div class="dc num" style="left:905px;top:644px;width:45px;height:24px">10</div>
<div class="dc num" style="left:951px;top:644px;width:46px;height:24px">005</div>
<div class="dc dn" style="left:998px;top:644px;width:37px;height:24px">01</div>
<div class="dc dn" style="left:1036px;top:644px;width:37px;height:24px">02</div>
<div class="dc" style="left:1074px;top:644px;width:37px;height:24px"><span class="ball">03</span></div>
<div class="dc dn" style="left:1112px;top:644px;width:37px;height:24px">04</div>
<div class="dc dn" style="left:1150px;top:644px;width:37px;height:24px">05</div>
<div class="dc dn" style="left:1188px;top:644px;width:37px;height:24px">06</div>
<div class="dc dn" style="left:1226px;top:644px;width:37px;height:24px">07</div>
<div class="dc dn" style="left:1264px;top:644px;width:37px;height:24px">08</div>
<div class="dc dn" style="left:1302px;top:644px;width:37px;height:24px">09</div>
<div class="dc dn" style="left:1340px;top:644px;width:37px;height:24px">10</div>
<div class="gc" style="left:1378px;top:644px;width:37px;height:24px"><svg width="12" height="12" viewBox="0 0 12 12"><path d="M0.6 9.3 L3.4 7.3 L5.4 10.2 L11 0.6" fill="none" stroke="#f00" stroke-width="1.6" stroke-linejoin="bevel"/></svg></div>
<div class="gc" style="left:1416px;top:644px;width:37px;height:24px"></div>
<div class="gc" style="left:1454px;top:644px;width:37px;height:24px"></div>
<div class="gc" style="left:1492px;top:644px;width:37px;height:24px"><svg width="12" height="12" viewBox="0 0 12 12"><path d="M0.6 9.3 L3.4 7.3 L5.4 10.2 L11 0.6" fill="none" stroke="#f00" stroke-width="1.6" stroke-linejoin="bevel"/></svg></div>
<div class="dc per" style="left:391px;top:669px;width:141px;height:24px">20180510152</div>
<div class="dc num" style="left:533px;top:669px;width:45px;height:24px">005</div>
<div class="dc num" style="left:579px;top:669px;width:46px;height:24px">009</div>
<div class="dc num" style="left:626px;top:669px;width:45px;height:24px">007</div>
<div class="dc num" style="left:672px;top:669px;width:46px;height:24px">003</div>
<div class="dc num" style="left:719px;top:669px;width:45px;height:24px">008</div>
<div class="dc num" style="left:765px;top:669px;width:46px;height:24px">004</div>
<div class="dc num" style="left:812px;top:669px;width:45px;height:24px">006</div>
<div class="dc num" style="left:858px;top:669px;width:46px;height:24px">10</div>
<div class="dc num" style="left:905px;top:669px;width:45px;height:24px">002</div>
<div class="dc num" style="left:951px;top:669px;width:46px;height:24px">001</div>
<div class="dc dn" style="left:998px;top:669px;width:37px;height:24px">01</div>
<div class="dc dn" style="left:1036px;top:669px;width:37px;height:24px">02</div>
<div class="dc dn" style="left:1074px;top:669px;width:37px;height:24px">03</div>
<div class="dc dn" style="left:1112px;top:669px;width:37px;height:24px">04</div>
<div class="dc" style="left:1150px;top:669px;width:37px;height:24px"><span class="ball">05</span></div>
<div class="dc dn" style="left:1188px;top:669px;width:37px;height:24px">06</div>
<div class="dc dn" style="left:1226px;top:669px;width:37px;height:24px">07</div>
<div class="dc dn" style="left:1264px;top:669px;width:37px;height:24px">08</div>
<div class="dc dn" style="left:1302px;top:669px;width:37px;height:24px">09</div>
<div class="dc dn" style="left:1340px;top:669px;width:37px;height:24px">10</div>
<div class="gc" style="left:1378px;top:669px;width:37px;height:24px"><svg width="12" height="12" viewBox="0 0 12 12"><path d="M0.6 9.3 L3.4 7.3 L5.4 10.2 L11 0.6" fill="none" stroke="#f00" stroke-width="1.6" stroke-linejoin="bevel"/></svg></div>
<div class="gc" style="left:1416px;top:669px;width:37px;height:24px"></div>
<div class="gc" style="left:1454px;top:669px;width:37px;height:24px"><svg width="12" height="12" viewBox="0 0 12 12"><path d="M0.6 9.3 L3.4 7.3 L5.4 10.2 L11 0.6" fill="none" stroke="#f00" stroke-width="1.6" stroke-linejoin="bevel"/></svg></div>
<div class="gc" style="left:1492px;top:669px;width:37px;height:24px"></div>
<div class="dc per" style="left:391px;top:694px;width:141px;height:24px">20180510151</div>
<div class="dc num" style="left:533px;top:694px;width:45px;height:24px">009</div>
<div class="dc num" style="left:579px;top:694px;width:46px;height:24px">003</div>
<div class="dc num" style="left:626px;top:694px;width:45px;height:24px">005</div>
<div class="dc num" style="left:672px;top:694px;width:46px;height:24px">004</div>
<div class="dc num" style="left:719px;top:694px;width:45px;height:24px">001</div>
<div class="dc num" style="left:765px;top:694px;width:46px;height:24px">002</div>
<div class="dc num" style="left:812px;top:694px;width:45px;height:24px">006</div>
<div class="dc num" style="left:858px;top:694px;width:46px;height:24px">008</div>
<div class="dc num" style="left:905px;top:694px;width:45px;height:24px">007</div>
<div class="dc num" style="left:951px;top:694px;width:46px;height:24px">10</div>
<div class="dc dn" style="left:998px;top:694px;width:37px;height:24px">01</div>
<div class="dc dn" style="left:1036px;top:694px;width:37px;height:24px">02</div>
<div class="dc dn" style="left:1074px;top:694px;width:37px;height:24px">03</div>
<div class="dc dn" style="left:1112px;top:694px;width:37px;height:24px">04</div>
<div class="dc dn" style="left:1150px;top:694px;width:37px;height:24px">05</div>
<div class="dc dn" style="left:1188px;top:694px;width:37px;height:24px">06</div>
<div class="dc dn" style="left:1226px;top:694px;width:37px;height:24px">07</div>
<div class="dc dn" style="left:1264px;top:694px;width:37px;height:24px">08</div>
<div class="dc" style="left:1302px;top:694px;width:37px;height:24px"><span class="ball">09</span></div>
<div class="dc dn" style="left:1340px;top:694px;width:37px;height:24px">10</div>
<div class="gc" style="left:1378px;top:694px;width:37px;height:24px"><svg width="12" height="12" viewBox="0 0 12 12"><path d="M0.6 9.3 L3.4 7.3 L5.4 10.2 L11 0.6" fill="none" stroke="#f00" stroke-width="1.6" stroke-linejoin="bevel"/></svg></div>
<div class="gc" style="left:1416px;top:694px;width:37px;height:24px"></div>
<div class="gc" style="left:1454px;top:694px;width:37px;height:24px"><svg width="12" height="12" viewBox="0 0 12 12"><path d="M0.6 9.3 L3.4 7.3 L5.4 10.2 L11 0.6" fill="none" stroke="#f00" stroke-width="1.6" stroke-linejoin="bevel"/></svg></div>
<div class="gc" style="left:1492px;top:694px;width:37px;height:24px"></div>
<div class="dc per" style="left:391px;top:719px;width:141px;height:24px">20180510150</div>
<div class="dc num" style="left:533px;top:719px;width:45px;height:24px">005</div>
<div class="dc num" style="left:579px;top:719px;width:46px;height:24px">003</div>
<div class="dc num" style="left:626px;top:719px;width:45px;height:24px">007</div>
<div class="dc num" style="left:672px;top:719px;width:46px;height:24px">008</div>
<div class="dc num" style="left:719px;top:719px;width:45px;height:24px">001</div>
<div class="dc num" style="left:765px;top:719px;width:46px;height:24px">10</div>
<div class="dc num" style="left:812px;top:719px;width:45px;height:24px">004</div>
<div class="dc num" style="left:858px;top:719px;width:46px;height:24px">006</div>
<div class="dc num" style="left:905px;top:719px;width:45px;height:24px">002</div>
<div class="dc num" style="left:951px;top:719px;width:46px;height:24px">009</div>
<div class="dc dn" style="left:998px;top:719px;width:37px;height:24px">01</div>
<div class="dc dn" style="left:1036px;top:719px;width:37px;height:24px">02</div>
<div class="dc dn" style="left:1074px;top:719px;width:37px;height:24px">03</div>
<div class="dc dn" style="left:1112px;top:719px;width:37px;height:24px">04</div>
<div class="dc" style="left:1150px;top:719px;width:37px;height:24px"><span class="ball">05</span></div>
<div class="dc dn" style="left:1188px;top:719px;width:37px;height:24px">06</div>
<div class="dc dn" style="left:1226px;top:719px;width:37px;height:24px">07</div>
<div class="dc dn" style="left:1264px;top:719px;width:37px;height:24px">08</div>
<div class="dc dn" style="left:1302px;top:719px;width:37px;height:24px">09</div>
<div class="dc dn" style="left:1340px;top:719px;width:37px;height:24px">10</div>
<div class="gc" style="left:1378px;top:719px;width:37px;height:24px"><svg width="12" height="12" viewBox="0 0 12 12"><path d="M0.6 9.3 L3.4 7.3 L5.4 10.2 L11 0.6" fill="none" stroke="#f00" stroke-width="1.6" stroke-linejoin="bevel"/></svg></div>
<div class="gc" style="left:1416px;top:719px;width:37px;height:24px"></div>
<div class="gc" style="left:1454px;top:719px;width:37px;height:24px"><svg width="12" height="12" viewBox="0 0 12 12"><path d="M0.6 9.3 L3.4 7.3 L5.4 10.2 L11 0.6" fill="none" stroke="#f00" stroke-width="1.6" stroke-linejoin="bevel"/></svg></div>
<div class="gc" style="left:1492px;top:719px;width:37px;height:24px"></div>
<div class="dc per" style="left:391px;top:744px;width:141px;height:24px">20180510149</div>
<div class="dc num" style="left:533px;top:744px;width:45px;height:24px">009</div>
<div class="dc num" style="left:579px;top:744px;width:46px;height:24px">002</div>
<div class="dc num" style="left:626px;top:744px;width:45px;height:24px">007</div>
<div class="dc num" style="left:672px;top:744px;width:46px;height:24px">10</div>
<div class="dc num" style="left:719px;top:744px;width:45px;height:24px">006</div>
<div class="dc num" style="left:765px;top:744px;width:46px;height:24px">005</div>
<div class="dc num" style="left:812px;top:744px;width:45px;height:24px">004</div>
<div class="dc num" style="left:858px;top:744px;width:46px;height:24px">003</div>
<div class="dc num" style="left:905px;top:744px;width:45px;height:24px">001</div>
<div class="dc num" style="left:951px;top:744px;width:46px;height:24px">008</div>
<div class="dc dn" style="left:998px;top:744px;width:37px;height:24px">01</div>
<div class="dc dn" style="left:1036px;top:744px;width:37px;height:24px">02</div>
<div class="dc dn" style="left:1074px;top:744px;width:37px;height:24px">03</div>
<div class="dc dn" style="left:1112px;top:744px;width:37px;height:24px">04</div>
<div class="dc dn" style="left:1150px;top:744px;width:37px;height:24px">05</div>
<div class="dc dn" style="left:1188px;top:744px;width:37px;height:24px">06</div>
<div class="dc dn" style="left:1226px;top:744px;width:37px;height:24px">07</div>
<div class="dc dn" style="left:1264px;top:744px;width:37px;height:24px">08</div>
<div class="dc" style="left:1302px;top:744px;width:37px;height:24px"><span class="ball">09</span></div>
<div class="dc dn" style="left:1340px;top:744px;width:37px;height:24px">10</div>
<div class="gc" style="left:1378px;top:744px;width:37px;height:24px"><svg width="12" height="12" viewBox="0 0 12 12"><path d="M0.6 9.3 L3.4 7.3 L5.4 10.2 L11 0.6" fill="none" stroke="#f00" stroke-width="1.6" stroke-linejoin="bevel"/></svg></div>
<div class="gc" style="left:1416px;top:744px;width:37px;height:24px"></div>
<div class="gc" style="left:1454px;top:744px;width:37px;height:24px"><svg width="12" height="12" viewBox="0 0 12 12"><path d="M0.6 9.3 L3.4 7.3 L5.4 10.2 L11 0.6" fill="none" stroke="#f00" stroke-width="1.6" stroke-linejoin="bevel"/></svg></div>
<div class="gc" style="left:1492px;top:744px;width:37px;height:24px"></div>
<div class="dc per" style="left:391px;top:769px;width:141px;height:24px">20180510148</div>
<div class="dc num" style="left:533px;top:769px;width:45px;height:24px">005</div>
<div class="dc num" style="left:579px;top:769px;width:46px;height:24px">10</div>
<div class="dc num" style="left:626px;top:769px;width:45px;height:24px">007</div>
<div class="dc num" style="left:672px;top:769px;width:46px;height:24px">009</div>
<div class="dc num" style="left:719px;top:769px;width:45px;height:24px">002</div>
<div class="dc num" style="left:765px;top:769px;width:46px;height:24px">006</div>
<div class="dc num" style="left:812px;top:769px;width:45px;height:24px">004</div>
<div class="dc num" style="left:858px;top:769px;width:46px;height:24px">008</div>
<div class="dc num" style="left:905px;top:769px;width:45px;height:24px">001</div>
<div class="dc num" style="left:951px;top:769px;width:46px;height:24px">003</div>
<div class="dc dn" style="left:998px;top:769px;width:37px;height:24px">01</div>
<div class="dc dn" style="left:1036px;top:769px;width:37px;height:24px">02</div>
<div class="dc dn" style="left:1074px;top:769px;width:37px;height:24px">03</div>
<div class="dc dn" style="left:1112px;top:769px;width:37px;height:24px">04</div>
<div class="dc" style="left:1150px;top:769px;width:37px;height:24px"><span class="ball">05</span></div>
<div class="dc dn" style="left:1188px;top:769px;width:37px;height:24px">06</div>
<div class="dc dn" style="left:1226px;top:769px;width:37px;height:24px">07</div>
<div class="dc dn" style="left:1264px;top:769px;width:37px;height:24px">08</div>
<div class="dc dn" style="left:1302px;top:769px;width:37px;height:24px">09</div>
<div class="dc dn" style="left:1340px;top:769px;width:37px;height:24px">10</div>
<div class="gc" style="left:1378px;top:769px;width:37px;height:24px"><svg width="12" height="12" viewBox="0 0 12 12"><path d="M0.6 9.3 L3.4 7.3 L5.4 10.2 L11 0.6" fill="none" stroke="#f00" stroke-width="1.6" stroke-linejoin="bevel"/></svg></div>
<div class="gc" style="left:1416px;top:769px;width:37px;height:24px"></div>
<div class="gc" style="left:1454px;top:769px;width:37px;height:24px"><svg width="12" height="12" viewBox="0 0 12 12"><path d="M0.6 9.3 L3.4 7.3 L5.4 10.2 L11 0.6" fill="none" stroke="#f00" stroke-width="1.6" stroke-linejoin="bevel"/></svg></div>
<div class="gc" style="left:1492px;top:769px;width:37px;height:24px"></div>
<div class="dc per" style="left:391px;top:794px;width:141px;height:24px">20180510147</div>
<div class="dc num" style="left:533px;top:794px;width:45px;height:24px">10</div>
<div class="dc num" style="left:579px;top:794px;width:46px;height:24px">001</div>
<div class="dc num" style="left:626px;top:794px;width:45px;height:24px">007</div>
<div class="dc num" style="left:672px;top:794px;width:46px;height:24px">009</div>
<div class="dc num" style="left:719px;top:794px;width:45px;height:24px">006</div>
<div class="dc num" style="left:765px;top:794px;width:46px;height:24px">008</div>
<div class="dc num" style="left:812px;top:794px;width:45px;height:24px">002</div>
<div class="dc num" style="left:858px;top:794px;width:46px;height:24px">005</div>
<div class="dc num" style="left:905px;top:794px;width:45px;height:24px">003</div>
<div class="dc num" style="left:951px;top:794px;width:46px;height:24px">004</div>
<div class="dc dn" style="left:998px;top:794px;width:37px;height:24px">01</div>
<div class="dc dn" style="left:1036px;top:794px;width:37px;height:24px">02</div>
<div class="dc dn" style="left:1074px;top:794px;width:37px;height:24px">03</div>
<div class="dc dn" style="left:1112px;top:794px;width:37px;height:24px">04</div>
<div class="dc dn" style="left:1150px;top:794px;width:37px;height:24px">05</div>
<div class="dc dn" style="left:1188px;top:794px;width:37px;height:24px">06</div>
<div class="dc dn" style="left:1226px;top:794px;width:37px;height:24px">07</div>
<div class="dc dn" style="left:1264px;top:794px;width:37px;height:24px">08</div>
<div class="dc dn" style="left:1302px;top:794px;width:37px;height:24px">09</div>
<div class="dc" style="left:1340px;top:794px;width:37px;height:24px"><span class="ball">010</span></div>
<div class="gc" style="left:1378px;top:794px;width:37px;height:24px"></div>
<div class="gc" style="left:1416px;top:794px;width:37px;height:24px"><svg width="12" height="12" viewBox="0 0 12 12"><path d="M0.6 9.3 L3.4 7.3 L5.4 10.2 L11 0.6" fill="none" stroke="#f00" stroke-width="1.6" stroke-linejoin="bevel"/></svg></div>
<div class="gc" style="left:1454px;top:794px;width:37px;height:24px"><svg width="12" height="12" viewBox="0 0 12 12"><path d="M0.6 9.3 L3.4 7.3 L5.4 10.2 L11 0.6" fill="none" stroke="#f00" stroke-width="1.6" stroke-linejoin="bevel"/></svg></div>
<div class="gc" style="left:1492px;top:794px;width:37px;height:24px"></div>
<div class="dc per" style="left:391px;top:819px;width:141px;height:24px">20180510146</div>
<div class="dc num" style="left:533px;top:819px;width:45px;height:24px">006</div>
<div class="dc num" style="left:579px;top:819px;width:46px;height:24px">008</div>
<div class="dc num" style="left:626px;top:819px;width:45px;height:24px">005</div>
<div class="dc num" style="left:672px;top:819px;width:46px;height:24px">009</div>
<div class="dc num" style="left:719px;top:819px;width:45px;height:24px">007</div>
<div class="dc num" style="left:765px;top:819px;width:46px;height:24px">10</div>
<div class="dc num" style="left:812px;top:819px;width:45px;height:24px">003</div>
<div class="dc num" style="left:858px;top:819px;width:46px;height:24px">004</div>
<div class="dc num" style="left:905px;top:819px;width:45px;height:24px">002</div>
<div class="dc num" style="left:951px;top:819px;width:46px;height:24px">001</div>
<div class="dc dn" style="left:998px;top:819px;width:37px;height:24px">01</div>
<div class="dc dn" style="left:1036px;top:819px;width:37px;height:24px">02</div>
<div class="dc dn" style="left:1074px;top:819px;width:37px;height:24px">03</div>
<div class="dc dn" style="left:1112px;top:819px;width:37px;height:24px">04</div>
<div class="dc dn" style="left:1150px;top:819px;width:37px;height:24px">05</div>
<div class="dc" style="left:1188px;top:819px;width:37px;height:24px"><span class="ball">06</span></div>
<div class="dc dn" style="left:1226px;top:819px;width:37px;height:24px">07</div>
<div class="dc dn" style="left:1264px;top:819px;width:37px;height:24px">08</div>
<div class="dc dn" style="left:1302px;top:819px;width:37px;height:24px">09</div>
<div class="dc dn" style="left:1340px;top:819px;width:37px;height:24px">10</div>
<div class="gc" style="left:1378px;top:819px;width:37px;height:24px"></div>
<div class="gc" style="left:1416px;top:819px;width:37px;height:24px"><svg width="12" height="12" viewBox="0 0 12 12"><path d="M0.6 9.3 L3.4 7.3 L5.4 10.2 L11 0.6" fill="none" stroke="#f00" stroke-width="1.6" stroke-linejoin="bevel"/></svg></div>
<div class="gc" style="left:1454px;top:819px;width:37px;height:24px"><svg width="12" height="12" viewBox="0 0 12 12"><path d="M0.6 9.3 L3.4 7.3 L5.4 10.2 L11 0.6" fill="none" stroke="#f00" stroke-width="1.6" stroke-linejoin="bevel"/></svg></div>
<div class="gc" style="left:1492px;top:819px;width:37px;height:24px"></div>
<div class="dc per" style="left:391px;top:844px;width:141px;height:24px">20180510145</div>
<div class="dc num" style="left:533px;top:844px;width:45px;height:24px">001</div>
<div class="dc num" style="left:579px;top:844px;width:46px;height:24px">002</div>
<div class="dc num" style="left:626px;top:844px;width:45px;height:24px">005</div>
<div class="dc num" style="left:672px;top:844px;width:46px;height:24px">007</div>
<div class="dc num" style="left:719px;top:844px;width:45px;height:24px">006</div>
<div class="dc num" style="left:765px;top:844px;width:46px;height:24px">10</div>
<div class="dc num" style="left:812px;top:844px;width:45px;height:24px">009</div>
<div class="dc num" style="left:858px;top:844px;width:46px;height:24px">004</div>
<div class="dc num" style="left:905px;top:844px;width:45px;height:24px">008</div>
<div class="dc num" style="left:951px;top:844px;width:46px;height:24px">003</div>
<div class="dc" style="left:998px;top:844px;width:37px;height:24px"><span class="ball">01</span></div>
<div class="dc dn" style="left:1036px;top:844px;width:37px;height:24px">02</div>
<div class="dc dn" style="left:1074px;top:844px;width:37px;height:24px">03</div>
<div class="dc dn" style="left:1112px;top:844px;width:37px;height:24px">04</div>
<div class="dc dn" style="left:1150px;top:844px;width:37px;height:24px">05</div>
<div class="dc dn" style="left:1188px;top:844px;width:37px;height:24px">06</div>
<div class="dc dn" style="left:1226px;top:844px;width:37px;height:24px">07</div>
<div class="dc dn" style="left:1264px;top:844px;width:37px;height:24px">08</div>
<div class="dc dn" style="left:1302px;top:844px;width:37px;height:24px">09</div>
<div class="dc dn" style="left:1340px;top:844px;width:37px;height:24px">10</div>
<div class="gc" style="left:1378px;top:844px;width:37px;height:24px"><svg width="12" height="12" viewBox="0 0 12 12"><path d="M0.6 9.3 L3.4 7.3 L5.4 10.2 L11 0.6" fill="none" stroke="#f00" stroke-width="1.6" stroke-linejoin="bevel"/></svg></div>
<div class="gc" style="left:1416px;top:844px;width:37px;height:24px"></div>
<div class="gc" style="left:1454px;top:844px;width:37px;height:24px"></div>
<div class="gc" style="left:1492px;top:844px;width:37px;height:24px"><svg width="12" height="12" viewBox="0 0 12 12"><path d="M0.6 9.3 L3.4 7.3 L5.4 10.2 L11 0.6" fill="none" stroke="#f00" stroke-width="1.6" stroke-linejoin="bevel"/></svg></div>
<div class="dc per" style="left:391px;top:869px;width:141px;height:24px">20180510144</div>
<div class="dc num" style="left:533px;top:869px;width:45px;height:24px">009</div>
<div class="dc num" style="left:579px;top:869px;width:46px;height:24px">003</div>
<div class="dc num" style="left:626px;top:869px;width:45px;height:24px">001</div>
<div class="dc num" style="left:672px;top:869px;width:46px;height:24px">005</div>
<div class="dc num" style="left:719px;top:869px;width:45px;height:24px">002</div>
<div class="dc num" style="left:765px;top:869px;width:46px;height:24px">007</div>
<div class="dc num" style="left:812px;top:869px;width:45px;height:24px">006</div>
<div class="dc num" style="left:858px;top:869px;width:46px;height:24px">004</div>
<div class="dc num" style="left:905px;top:869px;width:45px;height:24px">008</div>
<div class="dc num" style="left:951px;top:869px;width:46px;height:24px">10</div>
<div class="dc dn" style="left:998px;top:869px;width:37px;height:24px">01</div>
<div class="dc dn" style="left:1036px;top:869px;width:37px;height:24px">02</div>
<div class="dc dn" style="left:1074px;top:869px;width:37px;height:24px">03</div>
<div class="dc dn" style="left:1112px;top:869px;width:37px;height:24px">04</div>
<div class="dc dn" style="left:1150px;top:869px;width:37px;height:24px">05</div>
<div class="dc dn" style="left:1188px;top:869px;width:37px;height:24px">06</div>
<div class="dc dn" style="left:1226px;top:869px;width:37px;height:24px">07</div>
<div class="dc dn" style="left:1264px;top:869px;width:37px;height:24px">08</div>
<div class="dc" style="left:1302px;top:869px;width:37px;height:24px"><span class="ball">09</span></div>
<div class="dc dn" style="left:1340px;top:869px;width:37px;height:24px">10</div>
<div class="gc" style="left:1378px;top:869px;width:37px;height:24px"><svg width="12" height="12" viewBox="0 0 12 12"><path d="M0.6 9.3 L3.4 7.3 L5.4 10.2 L11 0.6" fill="none" stroke="#f00" stroke-width="1.6" stroke-linejoin="bevel"/></svg></div>
<div class="gc" style="left:1416px;top:869px;width:37px;height:24px"></div>
<div class="gc" style="left:1454px;top:869px;width:37px;height:24px"><svg width="12" height="12" viewBox="0 0 12 12"><path d="M0.6 9.3 L3.4 7.3 L5.4 10.2 L11 0.6" fill="none" stroke="#f00" stroke-width="1.6" stroke-linejoin="bevel"/></svg></div>
<div class="gc" style="left:1492px;top:869px;width:37px;height:24px"></div>
<div class="dc per" style="left:391px;top:894px;width:141px;height:24px">20180510143</div>
<div class="dc num" style="left:533px;top:894px;width:45px;height:24px">007</div>
<div class="dc num" style="left:579px;top:894px;width:46px;height:24px">009</div>
<div class="dc num" style="left:626px;top:894px;width:45px;height:24px">004</div>
<div class="dc num" style="left:672px;top:894px;width:46px;height:24px">003</div>
<div class="dc num" style="left:719px;top:894px;width:45px;height:24px">10</div>
<div class="dc num" style="left:765px;top:894px;width:46px;height:24px">002</div>
<div class="dc num" style="left:812px;top:894px;width:45px;height:24px">006</div>
<div class="dc num" style="left:858px;top:894px;width:46px;height:24px">001</div>
<div class="dc num" style="left:905px;top:894px;width:45px;height:24px">005</div>
<div class="dc num" style="left:951px;top:894px;width:46px;height:24px">008</div>
<div class="dc dn" style="left:998px;top:894px;width:37px;height:24px">01</div>
<div class="dc dn" style="left:1036px;top:894px;width:37px;height:24px">02</div>
<div class="dc dn" style="left:1074px;top:894px;width:37px;height:24px">03</div>
<div class="dc dn" style="left:1112px;top:894px;width:37px;height:24px">04</div>
<div class="dc dn" style="left:1150px;top:894px;width:37px;height:24px">05</div>
<div class="dc dn" style="left:1188px;top:894px;width:37px;height:24px">06</div>
<div class="dc" style="left:1226px;top:894px;width:37px;height:24px"><span class="ball">07</span></div>
<div class="dc dn" style="left:1264px;top:894px;width:37px;height:24px">08</div>
<div class="dc dn" style="left:1302px;top:894px;width:37px;height:24px">09</div>
<div class="dc dn" style="left:1340px;top:894px;width:37px;height:24px">10</div>
<div class="gc" style="left:1378px;top:894px;width:37px;height:24px"><svg width="12" height="12" viewBox="0 0 12 12"><path d="M0.6 9.3 L3.4 7.3 L5.4 10.2 L11 0.6" fill="none" stroke="#f00" stroke-width="1.6" stroke-linejoin="bevel"/></svg></div>
<div class="gc" style="left:1416px;top:894px;width:37px;height:24px"></div>
<div class="gc" style="left:1454px;top:894px;width:37px;height:24px"><svg width="12" height="12" viewBox="0 0 12 12"><path d="M0.6 9.3 L3.4 7.3 L5.4 10.2 L11 0.6" fill="none" stroke="#f00" stroke-width="1.6" stroke-linejoin="bevel"/></svg></div>
<div class="gc" style="left:1492px;top:894px;width:37px;height:24px"></div>
<div class="dc per" style="left:391px;top:919px;width:141px;height:24px">20180510142</div>
<div class="dc num" style="left:533px;top:919px;width:45px;height:24px">008</div>
<div class="dc num" style="left:579px;top:919px;width:46px;height:24px">006</div>
<div class="dc num" style="left:626px;top:919px;width:45px;height:24px">002</div>
<div class="dc num" style="left:672px;top:919px;width:46px;height:24px">001</div>
<div class="dc num" style="left:719px;top:919px;width:45px;height:24px">007</div>
<div class="dc num" style="left:765px;top:919px;width:46px;height:24px">004</div>
<div class="dc num" style="left:812px;top:919px;width:45px;height:24px">009</div>
<div class="dc num" style="left:858px;top:919px;width:46px;height:24px">005</div>
<div class="dc num" style="left:905px;top:919px;width:45px;height:24px">003</div>
<div class="dc num" style="left:951px;top:919px;width:46px;height:24px">10</div>
<div class="dc dn" style="left:998px;top:919px;width:37px;height:24px">01</div>
<div class="dc dn" style="left:1036px;top:919px;width:37px;height:24px">02</div>
<div class="dc dn" style="left:1074px;top:919px;width:37px;height:24px">03</div>
<div class="dc dn" style="left:1112px;top:919px;width:37px;height:24px">04</div>
<div class="dc dn" style="left:1150px;top:919px;width:37px;height:24px">05</div>
<div class="dc dn" style="left:1188px;top:919px;width:37px;height:24px">06</div>
<div class="dc dn" style="left:1226px;top:919px;width:37px;height:24px">07</div>
<div class="dc" style="left:1264px;top:919px;width:37px;height:24px"><span class="ball">08</span></div>
<div class="dc dn" style="left:1302px;top:919px;width:37px;height:24px">09</div>
<div class="dc dn" style="left:1340px;top:919px;width:37px;height:24px">10</div>
<div class="gc" style="left:1378px;top:919px;width:37px;height:24px"></div>
<div class="gc" style="left:1416px;top:919px;width:37px;height:24px"><svg width="12" height="12" viewBox="0 0 12 12"><path d="M0.6 9.3 L3.4 7.3 L5.4 10.2 L11 0.6" fill="none" stroke="#f00" stroke-width="1.6" stroke-linejoin="bevel"/></svg></div>
<div class="gc" style="left:1454px;top:919px;width:37px;height:24px"><svg width="12" height="12" viewBox="0 0 12 12"><path d="M0.6 9.3 L3.4 7.3 L5.4 10.2 L11 0.6" fill="none" stroke="#f00" stroke-width="1.6" stroke-linejoin="bevel"/></svg></div>
<div class="gc" style="left:1492px;top:919px;width:37px;height:24px"></div>
<div class="dc per" style="left:391px;top:944px;width:141px;height:24px">20180510141</div>
<div class="dc num" style="left:533px;top:944px;width:45px;height:24px">009</div>
<div class="dc num" style="left:579px;top:944px;width:46px;height:24px">001</div>
<div class="dc num" style="left:626px;top:944px;width:45px;height:24px">002</div>
<div class="dc num" style="left:672px;top:944px;width:46px;height:24px">003</div>
<div class="dc num" style="left:719px;top:944px;width:45px;height:24px">004</div>
<div class="dc num" style="left:765px;top:944px;width:46px;height:24px">005</div>
<div class="dc num" style="left:812px;top:944px;width:45px;height:24px">006</div>
<div class="dc num" style="left:858px;top:944px;width:46px;height:24px">007</div>
<div class="dc num" style="left:905px;top:944px;width:45px;height:24px">008</div>
<div class="dc num" style="left:951px;top:944px;width:46px;height:24px">10</div>
<div class="dc dn" style="left:998px;top:944px;width:37px;height:24px">01</div>
<div class="dc dn" style="left:1036px;top:944px;width:37px;height:24px">02</div>
<div class="dc dn" style="left:1074px;top:944px;width:37px;height:24px">03</div>
<div class="dc dn" style="left:1112px;top:944px;width:37px;height:24px">04</div>
<div class="dc dn" style="left:1150px;top:944px;width:37px;height:24px">05</div>
<div class="dc dn" style="left:1188px;top:944px;width:37px;height:24px">06</div>
<div class="dc dn" style="left:1226px;top:944px;width:37px;height:24px">07</div>
<div class="dc dn" style="left:1264px;top:944px;width:37px;height:24px">08</div>
<div class="dc" style="left:1302px;top:944px;width:37px;height:24px"><span class="ball">09</span></div>
<div class="dc dn" style="left:1340px;top:944px;width:37px;height:24px">10</div>
<div class="gc" style="left:1378px;top:944px;width:37px;height:24px"><svg width="12" height="12" viewBox="0 0 12 12"><path d="M0.6 9.3 L3.4 7.3 L5.4 10.2 L11 0.6" fill="none" stroke="#f00" stroke-width="1.6" stroke-linejoin="bevel"/></svg></div>
<div class="gc" style="left:1416px;top:944px;width:37px;height:24px"></div>
<div class="gc" style="left:1454px;top:944px;width:37px;height:24px"><svg width="12" height="12" viewBox="0 0 12 12"><path d="M0.6 9.3 L3.4 7.3 L5.4 10.2 L11 0.6" fill="none" stroke="#f00" stroke-width="1.6" stroke-linejoin="bevel"/></svg></div>
<div class="gc" style="left:1492px;top:944px;width:37px;height:24px"></div>
</body></html>
